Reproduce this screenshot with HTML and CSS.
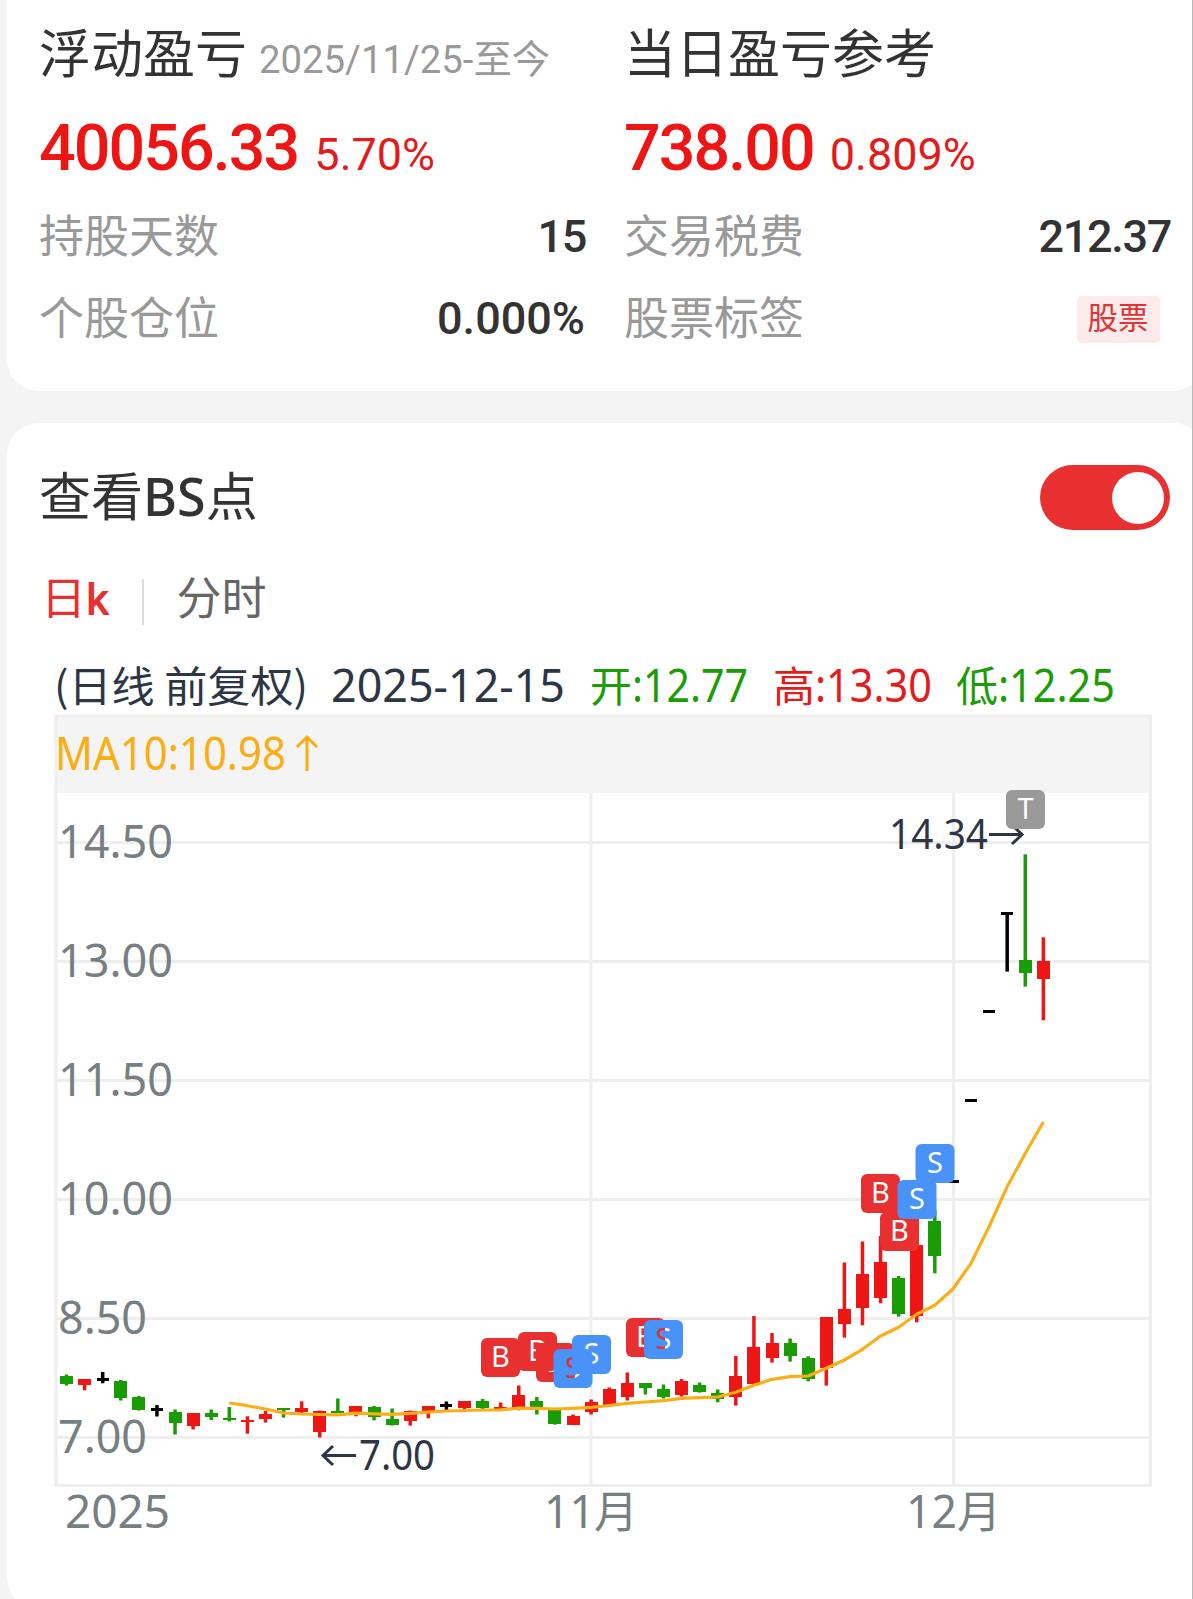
FILE: index.html
```html
<!DOCTYPE html>
<html lang="zh-CN">

<head>
  <title>持仓详情</title>
  <meta charset="utf-8">
  <meta name="viewport" content="width=device-width, initial-scale=1">
  <link rel="stylesheet" href="styles.css">
</head>

<body>
  <div class="page">
    <div class="card summary">
      <div class="col">
        <div class="title">浮动盈亏<span class="date">2025/11/25-至今</span></div>
        <div class="amount">40056.33<span class="percent">5.70%</span></div>
        <div class="row"><span class="label">持股天数</span><span class="value tight">15</span></div>
        <div class="row"><span class="label">个股仓位</span><span class="value">0.000%</span></div>
      </div>
      <div class="col">
        <div class="title">当日盈亏参考</div>
        <div class="amount">738.00<span class="percent">0.809%</span></div>
        <div class="row"><span class="label">交易税费</span><span class="value tight">212.37</span></div>
        <div class="row"><span class="label">股票标签</span><span class="tag">股票</span></div>
      </div>
    </div>

    <div class="card chart-card">
      <div class="card-head">
        <span class="card-title">查看<span class="latin">BS</span>点</span>
        <span class="switch"><span class="switch-dot"></span></span>
      </div>
      <div class="tabs">
        <span class="tab active">日<b>k</b></span>
        <span class="line"></span>
        <span class="tab">分时</span>
      </div>

      <svg class="chart" viewBox="40 650 1130 900" width="1130" height="900">
        <g class="info">
          <text class="dark" x="54" y="702" textLength="254" lengthAdjust="spacingAndGlyphs">(日线 前复权)</text>
          <text class="dark num" x="331" y="702" textLength="234" lengthAdjust="spacingAndGlyphs">2025-12-15</text>
          <text class="green" x="590" y="702">开</text>
          <text class="green num" x="632" y="702" textLength="116" lengthAdjust="spacingAndGlyphs">:12.77</text>
          <text class="red" x="773" y="702">高</text>
          <text class="red num" x="815" y="702" textLength="117" lengthAdjust="spacingAndGlyphs">:13.30</text>
          <text class="green" x="956" y="702">低</text>
          <text class="green num" x="998" y="702" textLength="117" lengthAdjust="spacingAndGlyphs">:12.25</text>
        </g>

        <rect class="band" x="56" y="716" width="1095" height="77" />
        <path class="grid" d="M56 842.5H1150M56 961.5H1150M56 1080.5H1150M56 1199.5H1150M56 1318.5H1150M56 1437.5H1150M591 793V1485M953.5 793V1485" />
        <rect class="frame" x="56" y="716" width="1094.5" height="769.5" />

        <text class="ma num" x="55" y="770" textLength="231" lengthAdjust="spacingAndGlyphs">MA10:10.98</text>
        <path class="arrow ma-arrow" d="M307 771V737M297 747L307 737L317 747" />

        <g class="axis">
          <text x="58" y="858" textLength="115" lengthAdjust="spacingAndGlyphs">14.50</text>
          <text x="58" y="977" textLength="115" lengthAdjust="spacingAndGlyphs">13.00</text>
          <text x="58" y="1096" textLength="115" lengthAdjust="spacingAndGlyphs">11.50</text>
          <text x="58" y="1215" textLength="115" lengthAdjust="spacingAndGlyphs">10.00</text>
          <text x="58" y="1334" textLength="89" lengthAdjust="spacingAndGlyphs">8.50</text>
          <text x="58" y="1453" textLength="89" lengthAdjust="spacingAndGlyphs">7.00</text>
          <text x="65" y="1528" textLength="105" lengthAdjust="spacingAndGlyphs">2025</text>
          <text x="544" y="1528" textLength="51" lengthAdjust="spacingAndGlyphs">11</text>
          <text class="month" x="594" y="1528">月</text>
          <text x="906" y="1528" textLength="51" lengthAdjust="spacingAndGlyphs">12</text>
          <text class="month" x="957" y="1528">月</text>
        </g>

        <g id="candles"></g>
        <polyline id="ma10" class="ma-line" />

        <path class="arrow" d="M356 1455.500H323M333 1446L323 1455.500L333 1465" />
        <text class="mark" x="359" y="1470" textLength="76" lengthAdjust="spacingAndGlyphs">7.00</text>
        <text class="mark" x="889" y="849" textLength="99" lengthAdjust="spacingAndGlyphs">14.34</text>
        <path class="arrow" d="M989 834.500H1022M1012 825L1022 834.500L1012 844" />

        <g id="badges"></g>
      </svg>
    </div>
  </div>

  <script>
    var ns = "http://www.w3.org/2000/svg";
    var startX = 66.5;
    var step = 18.09;

    // color, body top, body bottom, high, low
    var candles = [
      ["g", 1376, 1384, 1374.5, 1385.5], ["r", 1379, 1385, 1379, 1390.3], ["k", 1378, 1381, 1372, 1383.3],
      ["g", 1381, 1398, 1380, 1400.5], ["g", 1397, 1410, 1396, 1410.5], ["k", 1408, 1411, 1405, 1416.5],
      ["g", 1412, 1423, 1409.5, 1434.5], ["r", 1413, 1426, 1413, 1429.5], ["g", 1413, 1417, 1409.5, 1420],
      ["g", 1418, 1420, 1407, 1421.5], ["r", 1420, 1422, 1416.3, 1433.7], ["r", 1414, 1419, 1411, 1422.6],
      ["g", 1408, 1410, 1408, 1417.6], ["r", 1408, 1412, 1401.3, 1413.3], ["r", 1411, 1432, 1410.5, 1437.5],
      ["g", 1411, 1413, 1398.5, 1413], ["r", 1406, 1415, 1406, 1416.3], ["g", 1407, 1417, 1406, 1420.3],
      ["g", 1419, 1425, 1408.5, 1425.5], ["r", 1411, 1421, 1410.5, 1425.6], ["r", 1406, 1413, 1406, 1418.3],
      ["k", 1404, 1407, 1401.5, 1410], ["r", 1401, 1408, 1401, 1409], ["g", 1401, 1408, 1399, 1409],
      ["r", 1407, 1409, 1402.5, 1409], ["r", 1395, 1408, 1385.5, 1410.3], ["g", 1401, 1407, 1397, 1414.5],
      ["g", 1410, 1424, 1409.5, 1424.6], ["r", 1416, 1425, 1414.5, 1425], ["r", 1402, 1412, 1399.5, 1414.5],
      ["r", 1389, 1405, 1387.5, 1407], ["r", 1383, 1397, 1372.5, 1400.5], ["g", 1383, 1388, 1383, 1394.5],
      ["g", 1389, 1397, 1384.5, 1398.5], ["r", 1381, 1395, 1379, 1396.6], ["g", 1385, 1392, 1382.5, 1392.6],
      ["g", 1393, 1399, 1389.5, 1402.3], ["r", 1376, 1397, 1356, 1405.6], ["r", 1347, 1384, 1316, 1385],
      ["r", 1343, 1358, 1333, 1362.6], ["g", 1343, 1356, 1338.5, 1361.6], ["g", 1358, 1379, 1356.3, 1381.3],
      ["r", 1317, 1368, 1317, 1385.6], ["r", 1309, 1324, 1262.5, 1337.6], ["r", 1274, 1308, 1241.5, 1325.3],
      ["r", 1262, 1298, 1236, 1303.3], ["g", 1278, 1314, 1276, 1316.6], ["r", 1245, 1316, 1245, 1322.3],
      ["g", 1221, 1256, 1210, 1273.3], ["k", 1180, 1183, 1180, 1183], ["k", 1099, 1102, 1099, 1102],
      ["k", 1010, 1013, 1010, 1013], ["k", 912, 915, 912, 971.6], ["g", 960, 973, 854.3, 986.6],
      ["r", 961, 979, 937.3, 1020.3]
    ];

    // starts from the 10th day
    var ma10 = [
      1403, 1405.7, 1409, 1413, 1414, 1414.5, 1414.8, 1413.2, 1413.8, 1414.4, 1413.3, 1412.2, 1411, 1410.5, 1410, 1409.8,
      1408.2, 1408.3, 1409, 1408.3, 1407.3, 1405.5, 1403.3, 1402, 1400.6, 1398.3, 1397.7, 1397, 1392.3, 1385.3,
      1379.3, 1376.6, 1376, 1368.3, 1360, 1349.3, 1336, 1327.3, 1314.3, 1305.3, 1289, 1263.3, 1226.6,
      1186.6, 1153.3, 1122
    ];

    var badges = [
      ["B", 481, 1338], ["B", 518, 1332], ["B", 536, 1343], ["S", 553.5, 1349], ["S", 572, 1335],
      ["B", 626, 1318], ["S", 644, 1320],
      ["B", 861, 1174], ["B", 880, 1212], ["S", 897.5, 1180], ["S", 915.5, 1144],
      ["T", 1006, 790]
    ];
    var colors = { B: "#e83030", S: "#4892f8", T: "#999999" };

    function add(parent, name, attrs) {
      var el = document.createElementNS(ns, name);
      for (var key in attrs) {
        el.setAttribute(key, attrs[key]);
      }
      parent.appendChild(el);
      return el;
    }

    function drawCandles() {
      var g = document.getElementById("candles");
      candles.forEach(function (c, i) {
        var x = startX + i * step;
        var w = c[0] == "k" ? 12 : 13;
        add(g, "rect", { "class": c[0], x: x - 1.75, y: c[3], width: 3.5, height: c[4] - c[3] });
        add(g, "rect", { "class": c[0], x: Math.round(x - w / 2), y: c[1], width: w, height: c[2] - c[1] });
      });
    }

    function drawMa() {
      var points = ma10.map(function (y, i) {
        return (startX + (i + 9) * step).toFixed(1) + "," + y;
      });
      document.getElementById("ma10").setAttribute("points", points.join(" "));
    }

    // the letter is see-through, so it is filled with the badges lying below it
    function drawBadges() {
      var g = document.getElementById("badges");
      badges.forEach(function (b, i) {
        var p = add(g, "pattern", { id: "below" + i, patternUnits: "userSpaceOnUse", x: 0, y: 0, width: 1200, height: 1600 });
        add(p, "rect", { width: 1200, height: 1600, fill: "#fff" });
        for (var j = 0; j < i; j++) {
          add(p, "rect", { x: badges[j][1], y: badges[j][2], width: 39, height: 39, rx: 6, fill: colors[badges[j][0]] });
        }
        add(g, "rect", { x: b[1], y: b[2], width: 39, height: 39, rx: 6, fill: colors[b[0]] });
        var t = add(g, "text", { "class": "badge", x: b[1] + 19.5, y: b[2] + 29, fill: "url(#below" + i + ")" });
        t.textContent = b[0];
      });
    }

    drawCandles();
    drawMa();
    drawBadges();
  </script>
</body>

</html>
```

FILE: styles.css
```css
body {
  margin: 0;
  background: #f4f4f4;
  font-family: Roboto, "Noto Sans CJK SC", sans-serif;
  color: #333;
}

.page {
  position: relative;
  width: 1193px;
  height: 1599px;
  overflow: hidden;
}

.page:after {
  content: "";
  position: absolute;
  top: 0;
  right: 0;
  width: 1px;
  height: 100%;
  background: #b8b8b8;
}

.card {
  box-sizing: border-box;
  width: 1198px;
  margin-left: 7px;
  padding-left: 32px;
  background: #fff;
  border-radius: 32px;
}

/* 盈亏 */
.summary {
  display: flex;
  gap: 39px;
  height: 391px;
  border-radius: 0 0 32px 32px;
}

.col {
  width: 546px;
}

.title {
  height: 106px;
  line-height: 112px;
  font-size: 52px;
  white-space: nowrap;
}

.date {
  margin-left: 12px;
  font-size: 38.3px;
  color: #999;
}

.amount {
  height: 87px;
  line-height: 85px;
  font-size: 64.5px;
  font-weight: 500;
  letter-spacing: -1.9px;
  color: #ee1515;
  white-space: nowrap;
}

.percent {
  margin-left: 16px;
  font-size: 45px;
  font-weight: 400;
  letter-spacing: 0;
  color: #e31b1b;
}

.row {
  display: flex;
  justify-content: space-between;
  align-items: center;
  height: 82px;
}

.label {
  margin-top: -2px;
  font-size: 45px;
  color: #999;
}

.value {
  padding-top: 4px;
  font-size: 45px;
  font-weight: 500;
}

.value.tight {
  margin-right: -1px;
  letter-spacing: -1.3px;
}

.tag {
  width: 83px;
  height: 47px;
  margin: 6px 10px 0 0;
  line-height: 46px;
  font-size: 30.5px;
  text-align: center;
  text-indent: -1px;
  color: #dc3535;
  background: #fdeaea;
  border-radius: 5px;
}

/* K线 */
.chart-card {
  height: 1186px;
  margin-top: 32px;
}

.card-head {
  display: flex;
  justify-content: space-between;
  align-items: center;
  width: 1131px;
  height: 149px;
}

.card-title {
  padding-bottom: 8px;
  font-size: 52px;
}

.card-title .latin {
  font-family: "Noto Sans", sans-serif;
  font-weight: 500;
}

.switch {
  display: flex;
  justify-content: flex-end;
  align-items: center;
  box-sizing: border-box;
  width: 130px;
  height: 65px;
  padding-right: 6px;
  background: #e83030;
  border-radius: 33px;
}

.switch-dot {
  width: 52px;
  height: 52px;
  background: #fff;
  border-radius: 50%;
}

.tabs {
  display: flex;
  align-items: center;
  box-sizing: border-box;
  height: 78px;
  padding-bottom: 31px;
}

.tab {
  font-size: 45px;
  color: #666;
}

.tab.active {
  margin-left: 2px;
  color: #e83030;
}

.tab b {
  font-weight: 500;
}

.line {
  width: 2px;
  height: 46px;
  margin: 13px 32px 0 33px;
  background: #ddd;
}

.chart {
  display: block;
  margin-left: 1px;
  font-family: "Noto Sans", "Noto Sans CJK SC", sans-serif;
}

.info {
  font-family: "Noto Sans CJK SC", sans-serif;
  font-size: 42px;
}

.num {
  font-family: "Noto Sans", sans-serif;
  font-size: 45px;
}

.dark {
  fill: #2c3645;
}

.green {
  fill: #1c9c06;
}

.red {
  fill: #e31b1b;
}

.band {
  fill: #f4f4f4;
}

.grid,
.frame {
  fill: none;
  stroke: #eee;
  stroke-width: 3px;
}

.axis {
  font-size: 46px;
  fill: #777f82;
}

.axis .month {
  font-family: "Noto Sans CJK SC", sans-serif;
  font-size: 44px;
}

.mark {
  font-size: 41px;
  fill: #2c3645;
}

.ma {
  fill: #fbae12;
}

.arrow {
  fill: none;
  stroke: #2c3645;
  stroke-width: 3px;
}

.ma-arrow {
  stroke: #fbae12;
}

.ma-line {
  fill: none;
  stroke: #faae17;
  stroke-width: 3.2px;
  stroke-linejoin: round;
}

.r {
  fill: #ee1515;
}

.g {
  fill: #1a9c04;
}

.k {
  fill: #000;
}

.badge {
  font-family: "Noto Sans", sans-serif;
  font-size: 29px;
  font-weight: 400;
  text-anchor: middle;
}
```
